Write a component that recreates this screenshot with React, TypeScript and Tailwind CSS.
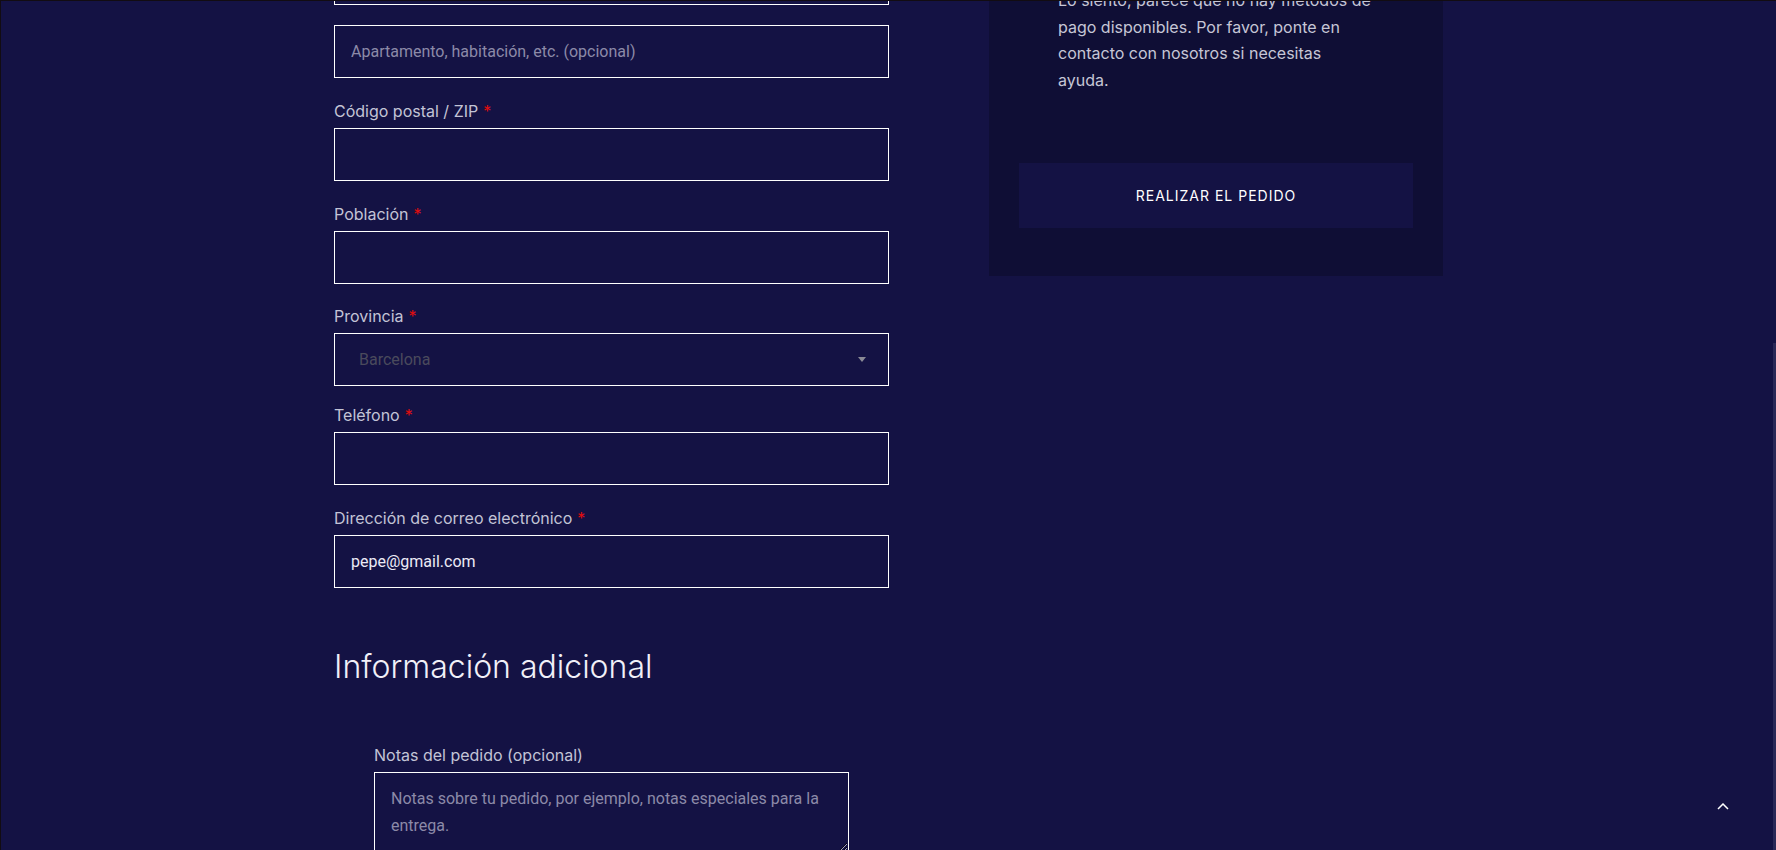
import React from "react";

const inter = { fontFamily: '"Inter", "Liberation Sans", sans-serif' };

function Label({ text, required = true }: { text: string; required?: boolean }) {
  return (
    <label className="block h-[24px] leading-[24px] text-[16px] text-[#c3c4d6] mb-[5px] font-['Inter',sans-serif]">
      {text}
      {required && <span className="text-[#e20d0d] ml-[5px]">*</span>}
    </label>
  );
}

function TextInput({ placeholder, value }: { placeholder?: string; value?: string }) {
  return (
    <input
      type="text"
      defaultValue={value}
      placeholder={placeholder}
      className="block w-full h-[53px] border border-white bg-transparent px-[16px] text-[16px] text-[#eceaf6] placeholder:text-[#8c8aa8] outline-none font-['Roboto',sans-serif]"
    />
  );
}

export default function App() {
  return (
    <div className="h-screen w-full bg-[#141244] border-t border-l border-[#120c12] overflow-hidden">
      <div className="mx-auto w-[1109px] flex flex-row gap-[100px]">
        {/* Left column: billing form */}
        <div className="w-[555px] flex flex-col">
          <input
            type="text"
            className="block w-full h-[53px] mt-[-49px] border border-white bg-transparent outline-none"
          />
          <div className="mt-[20px]">
            <TextInput placeholder="Apartamento, habitación, etc. (opcional)" />
          </div>

          <div className="mt-[21px]">
            <Label text="Código postal / ZIP" />
            <TextInput />
          </div>

          <div className="mt-[21px]">
            <Label text="Población" />
            <TextInput />
          </div>

          <div className="mt-[20px]">
            <Label text="Provincia" />
            <div className="flex items-center justify-between h-[53px] border border-white pl-[24px] pr-[22px] font-['Roboto',sans-serif]">
              <span className="text-[16px] text-[#4a4a5c]">Barcelona</span>
              <svg width="8" height="5" viewBox="0 0 8 5">
                <polygon points="0,0 8,0 4,5" fill="#8a8a96" />
              </svg>
            </div>
          </div>

          <div className="mt-[17px]">
            <Label text="Teléfono" />
            <TextInput />
          </div>

          <div className="mt-[21px]">
            <Label text="Dirección de correo electrónico" />
            <TextInput value="pepe@gmail.com" />
          </div>

          <h3
            className="mt-[60px] text-[32px] leading-[38px] text-[#f1f0f8] font-light"
            style={inter}
          >
            Información adicional
          </h3>

          <div className="mt-[57px] px-[40px]">
            <label className="block h-[24px] leading-[24px] text-[16px] text-[#c3c4d6] mb-[5px] font-['Inter',sans-serif]">
              Notas del pedido (opcional)
            </label>
            <textarea
              placeholder="Notas sobre tu pedido, por ejemplo, notas especiales para la entrega."
              className="block w-full h-[80px] border border-white bg-transparent pt-[12px] px-[16px] text-[16px] leading-[27px] text-[#eceaf6] placeholder:text-[#8c8aa8] outline-none font-['Roboto',sans-serif]"
            />
          </div>
        </div>

        {/* Right column: order review / payment */}
        <div className="w-[454px] self-start mt-[-44px]">
          <div className="bg-[#0f0e35] pt-[30px] px-[30px] pb-[48px]">
            <p
              className="pl-[39px] text-[16px] leading-[26.5px] text-[#c6c6d6]"
              style={inter}
            >
              Lo siento, parece que no hay métodos de
              <br />
              pago disponibles. Por favor, ponte en
              <br />
              contacto con nosotros si necesitas
              <br />
              ayuda.
            </p>
            <button
              className="mt-[70px] w-full h-[65px] bg-[#141244] text-white text-[14px] font-normal tracking-[1px] uppercase"
              style={inter}
            >
              Realizar el pedido
            </button>
          </div>
        </div>
      </div>

      {/* scrollbar thumb */}
      <div className="fixed right-0 top-[343px] bottom-0 w-[3px] bg-[#2a2857]" />

      {/* back to top */}
      <div className="fixed right-[47px] bottom-[41px] w-[12px] h-[6px]">
        <svg width="12" height="7" viewBox="0 0 12 7" className="block">
          <polyline points="1,6 6,1 11,6" fill="none" stroke="#ffffff" strokeWidth="1.5" />
        </svg>
      </div>
    </div>
  );
}
